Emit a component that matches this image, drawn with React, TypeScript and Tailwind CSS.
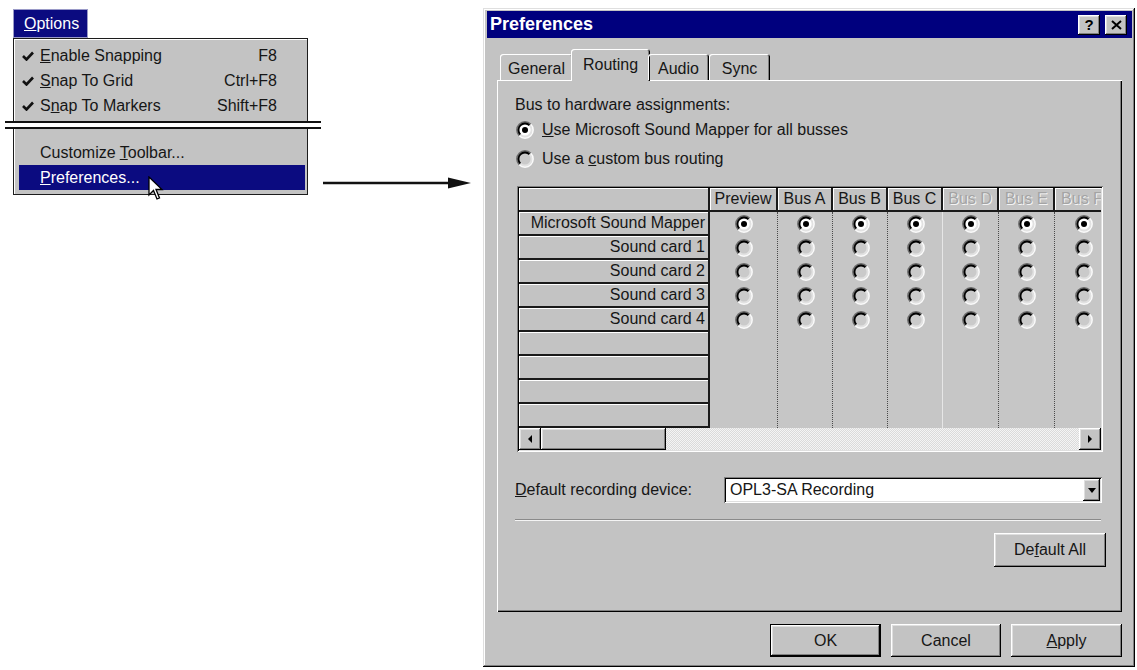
import React from "react";

const RAISED =
  "shadow-[inset_-1px_-1px_0_#000,inset_1px_1px_0_#fff,inset_-2px_-2px_0_#808080,inset_2px_2px_0_#dfdfdf]";
const SUNKEN =
  "shadow-[inset_1px_1px_0_#808080,inset_-1px_-1px_0_#fff,inset_2px_2px_0_#000,inset_-2px_-2px_0_#dfdfdf]";

function Check() {
  return (
    <svg width="12" height="10" viewBox="0 0 12 10">
      <path d="M1 5 L4.5 8.5 L11 1.5" fill="none" stroke="#111" strokeWidth="2.6" />
    </svg>
  );
}

function Radio({ checked }: { checked?: boolean }) {
  return (
    <svg width="18" height="18" viewBox="0 0 18 18">
      <circle cx="9" cy="9" r="6.5" fill={checked ? "#fff" : "#cacaca"} />
      <path d="M3.34 14.66 A8 8 0 0 1 14.66 3.34" fill="none" stroke="#6a6a6a" strokeWidth="1.8" />
      <path d="M14.66 3.34 A8 8 0 0 1 3.34 14.66" fill="none" stroke="#fafafa" strokeWidth="1.8" />
      <path d="M4.4 13.6 A6.5 6.5 0 0 1 13.6 4.4" fill="none" stroke="#000" strokeWidth="1.8" />
      <path d="M13.6 4.4 A6.5 6.5 0 0 1 4.4 13.6" fill="none" stroke="#e2e2e2" strokeWidth="1.8" />
      {checked && <circle cx="9" cy="9" r="3" fill="#000" />}
    </svg>
  );
}

function Cursor() {
  return (
    <svg width="16" height="26" viewBox="0 0 16 26">
      <path
        d="M1 1 L1 19 L5.5 14.5 L9 23 L11.5 22 L8 13.5 L14 13.5 Z"
        fill="#fff"
        stroke="#000"
        strokeWidth="1.3"
        strokeLinejoin="miter"
      />
    </svg>
  );
}

function MenuItem({
  label,
  shortcut,
}: {
  label: React.ReactNode;
  shortcut: string;
}) {
  return (
    <div className="flex items-center h-[25px] pl-[8px] pr-[30px]">
      <div className="w-[18px] flex items-center">
        <Check />
      </div>
      <div>{label}</div>
      <div className="ml-auto">{shortcut}</div>
    </div>
  );
}

const rows = ["Microsoft Sound Mapper", "Sound card 1", "Sound card 2", "Sound card 3", "Sound card 4", "", "", "", ""];

const cols: { name: string; w: string; inner: string; disabled?: boolean; sep: string }[] = [
  { name: "Preview", w: "w-[68px]", inner: "w-[68px]", sep: "border-r border-dotted border-[#4a4a4a]" },
  { name: "Bus A", w: "w-[55px]", inner: "w-[55px]", sep: "border-r border-dotted border-[#4a4a4a]" },
  { name: "Bus B", w: "w-[55px]", inner: "w-[55px]", sep: "border-r border-dotted border-[#4a4a4a]" },
  { name: "Bus C", w: "w-[55px]", inner: "w-[55px]", sep: "border-r border-solid border-[#e6e6e6]" },
  { name: "Bus D", w: "w-[56px]", inner: "w-[56px]", disabled: true, sep: "border-r border-dotted border-[#4a4a4a]" },
  { name: "Bus E", w: "w-[56px]", inner: "w-[56px]", disabled: true, sep: "border-r border-dotted border-[#4a4a4a]" },
  { name: "Bus F", w: "w-[46px]", inner: "w-[56px]", disabled: true, sep: "" },
];

function Button({
  children,
  w,
  isDefault,
}: {
  children: React.ReactNode;
  w: string;
  isDefault?: boolean;
}) {
  if (isDefault) {
    return (
      <div className={`${w} h-full border border-black`}>
        <div className={`w-full h-full bg-[#c3c3c3] flex items-center justify-center ${RAISED}`}>{children}</div>
      </div>
    );
  }
  return <div className={`${w} h-full bg-[#c3c3c3] flex items-center justify-center ${RAISED}`}>{children}</div>;
}

export default function App() {
  return (
    <div className="w-[1137px] h-[670px] bg-white flex items-start overflow-hidden font-['Liberation_Sans',Arial,sans-serif] text-[16px] text-[#161616]">
      {/* Menu */}
      <div className="w-[316px] ml-[5px] mt-[9px] shrink-0">
        <div className="ml-[8px] w-[75px] h-[29px] bg-[#0b0b80] border border-[#9a9ac8] text-white leading-[27px] pl-[10px]">
          <u>O</u>ptions
        </div>
        <div className="ml-[8px] w-[295px] h-[83px] bg-[#c3c3c3] border border-b-0 border-[#1c1c1c] pt-[4px] shadow-[inset_1px_1px_0_#fff]">
          <MenuItem label={<><u>E</u>nable Snapping</>} shortcut="F8" />
          <MenuItem label={<><u>S</u>nap To Grid</>} shortcut="Ctrl+F8" />
          <MenuItem label={<>S<u>n</u>ap To Markers</>} shortcut="Shift+F8" />
        </div>
        <div className="h-[8px] border-y-2 border-[#111] bg-white" />
        <div className="ml-[8px] w-[295px] h-[66px] bg-[#c3c3c3] border border-t-0 border-[#1c1c1c] pt-[11px] shadow-[inset_1px_0_0_#fff]">
          <div className="h-[25px] flex items-center pl-[26px]">
            <span>
              Customize <u>T</u>oolbar...
            </span>
          </div>
          <div className="relative ml-[5px] mr-[2px] h-[25px] bg-[#0b0b80] text-white flex items-center pl-[21px]">
            <span>
              <u>P</u>references...
            </span>
            <div className="absolute left-[129px] top-[11px]">
              <Cursor />
            </div>
          </div>
        </div>
      </div>

      {/* Arrow */}
      <div className="mt-[176px] shrink-0">
        <svg width="150" height="14" viewBox="0 0 150 14">
          <line x1="2" y1="7" x2="132" y2="7" stroke="#111" strokeWidth="2.6" />
          <path d="M127 1.5 L150 7 L127 12.5 Z" fill="#111" />
        </svg>
      </div>

      {/* Dialog */}
      <div className="ml-[12px] mt-[8px] w-[652px] h-[659px] shrink-0 bg-[#c3c3c3] pt-[3px] pl-[4px] pr-[3px] flex flex-col shadow-[inset_-1px_-1px_0_#000,inset_1px_1px_0_#dfdfdf,inset_-2px_-2px_0_#808080,inset_2px_2px_0_#fff]">
        {/* Title bar */}
        <div className="h-[27px] bg-[#00007e] flex items-center pl-[3px] pr-[5px]">
          <div className="text-white font-bold text-[18px]">Preferences</div>
          <div className="ml-auto flex gap-[5px]">
            <div className={`w-[22px] h-[20px] bg-[#c3c3c3] flex items-center justify-center font-bold text-[15px] leading-none text-black ${RAISED}`}>
              ?
            </div>
            <div className={`w-[22px] h-[20px] bg-[#c3c3c3] flex items-center justify-center ${RAISED}`}>
              <svg width="11" height="10" viewBox="0 0 11 10">
                <path d="M1 1 L10 9 M10 1 L1 9" stroke="#000" strokeWidth="2" />
              </svg>
            </div>
          </div>
        </div>

        <div className="px-[10px] pt-[11px] flex flex-col">
          {/* Tabs */}
          <div className="relative z-10 flex items-end h-[32px] pl-[3px]">
            <div className="w-[73px] h-[26px] mb-[1px] flex items-center justify-center pt-[4px] rounded-t-[3px] shadow-[inset_1px_1px_0_#fff,inset_-1px_0_0_#000,inset_-2px_0_0_#808080]">
              General
            </div>
            <div className="w-[79px] -mx-[2px] h-[32px] bg-[#c3c3c3] flex items-center justify-center pb-[1px] rounded-t-[3px] shadow-[inset_1px_1px_0_#fff,inset_-1px_0_0_#000,inset_-2px_0_0_#808080]">
              Routing
            </div>
            <div className="w-[61px] h-[26px] mb-[1px] flex items-center justify-center pt-[4px] rounded-t-[3px] shadow-[inset_1px_1px_0_#fff,inset_-1px_0_0_#000,inset_-2px_0_0_#808080]">
              Audio
            </div>
            <div className="w-[61px] h-[26px] mb-[1px] flex items-center justify-center pt-[4px] rounded-t-[3px] shadow-[inset_1px_1px_0_#fff,inset_-1px_0_0_#000,inset_-2px_0_0_#808080]">
              Sync
            </div>
          </div>

          {/* Panel */}
          <div className="-mt-[1px] h-[532px] pl-[18px] pr-[17px] pt-[15px] flex flex-col shadow-[inset_1px_1px_0_#fff,inset_-1px_-1px_0_#000,inset_-2px_-2px_0_#808080]">
            <div className="h-[20px] leading-[20px]">Bus to hardware assignments:</div>
            <div className="h-[28px] mt-[1px] flex items-center pl-[1px] gap-[8px]">
              <Radio checked />
              <span>
                <u>U</u>se Microsoft Sound Mapper for all busses
              </span>
            </div>
            <div className="h-[30px] flex items-center pl-[1px] gap-[8px]">
              <Radio />
              <span>
                Use a <u>c</u>ustom bus routing
              </span>
            </div>

            {/* Grid */}
            <div className={`mt-[12px] ml-[2px] w-[586px] h-[266px] p-[2px] bg-[#c6c6c6] flex flex-col ${SUNKEN}`}>
              <div className="flex h-[240px]">
                <div className="w-[191px] flex flex-col border-r-2 border-[#1a1a1a]">
                  <div className="h-[24px] border-b-2 border-[#1a1a1a] bg-[#c3c3c3] shadow-[inset_1px_1px_0_#fff]" />
                  {rows.map((r, i) => (
                    <div
                      key={i}
                      className="h-[24px] border-b-2 border-[#1a1a1a] bg-[#c3c3c3] shadow-[inset_1px_1px_0_#fff] text-right pr-[3px] leading-[22px]"
                    >
                      {r}
                    </div>
                  ))}
                </div>
                {cols.map((c, ci) => (
                  <div key={ci} className={`${c.w} overflow-hidden flex flex-col`}>
                    <div
                      className={`${c.inner} h-[24px] border-b-2 border-r-2 border-[#1a1a1a] bg-[#c3c3c3] shadow-[inset_1px_1px_0_#fff] flex items-center justify-center shrink-0 ${
                        c.disabled ? "text-[#a4a4a4] [text-shadow:1px_1px_0_#f4f4f4]" : ""
                      }`}
                    >
                      {c.name}
                    </div>
                    <div className={`${c.inner} flex-1 flex flex-col ${c.sep}`}>
                      {[0, 1, 2, 3, 4].map((ri) => (
                        <div key={ri} className="h-[24px] flex items-center justify-center pl-[1px]">
                          <Radio checked={ri === 0} />
                        </div>
                      ))}
                    </div>
                  </div>
                ))}
              </div>
              {/* scrollbar */}
              <div className="h-[22px] flex">
                <div className={`w-[22px] h-full bg-[#c3c3c3] flex items-center justify-center ${RAISED}`}>
                  <svg width="6" height="8" viewBox="0 0 6 8">
                    <path d="M5 0 L1 4 L5 8 Z" fill="#000" />
                  </svg>
                </div>
                <div className={`w-[125px] h-full bg-[#c3c3c3] ${RAISED}`} />
                <div className="flex-1 h-full bg-[repeating-conic-gradient(#dadada_0%_25%,#f4f4f4_0%_50%)] bg-[length:2px_2px]" />
                <div className={`w-[22px] h-full bg-[#c3c3c3] flex items-center justify-center ${RAISED}`}>
                  <svg width="6" height="8" viewBox="0 0 6 8">
                    <path d="M1 0 L5 4 L1 8 Z" fill="#000" />
                  </svg>
                </div>
              </div>
            </div>

            {/* Recording device */}
            <div className="mt-[25px] h-[26px] flex items-center">
              <div className="w-[209px]">
                <u>D</u>efault recording device:
              </div>
              <div className={`w-[378px] h-[26px] bg-white p-[2px] flex items-center ${SUNKEN}`}>
                <div className="pl-[4px] flex-1">OPL3-SA Recording</div>
                <div className={`w-[17px] h-full bg-[#c3c3c3] flex items-center justify-center ${RAISED}`}>
                  <svg width="8" height="5" viewBox="0 0 8 5">
                    <path d="M0 0 L8 0 L4 5 Z" fill="#000" />
                  </svg>
                </div>
              </div>
            </div>

            <div className="mt-[16px] w-[586px] h-[2px] border-t border-[#8a8a8a] border-b border-b-[#f4f4f4]" />

            <div className="mt-[12px] h-[34px] flex justify-end -mr-[1px]">
              <Button w="w-[112px]">
                <span>
                  De<u>f</u>ault All
                </span>
              </Button>
            </div>
          </div>

          {/* Bottom buttons */}
          <div className="mt-[12px] h-[33px] flex justify-end gap-[10px]">
            <Button w="w-[111px]" isDefault>
              OK
            </Button>
            <Button w="w-[110px]">Cancel</Button>
            <Button w="w-[111px]">
              <span>
                <u>A</u>pply
              </span>
            </Button>
          </div>
        </div>
      </div>
    </div>
  );
}
